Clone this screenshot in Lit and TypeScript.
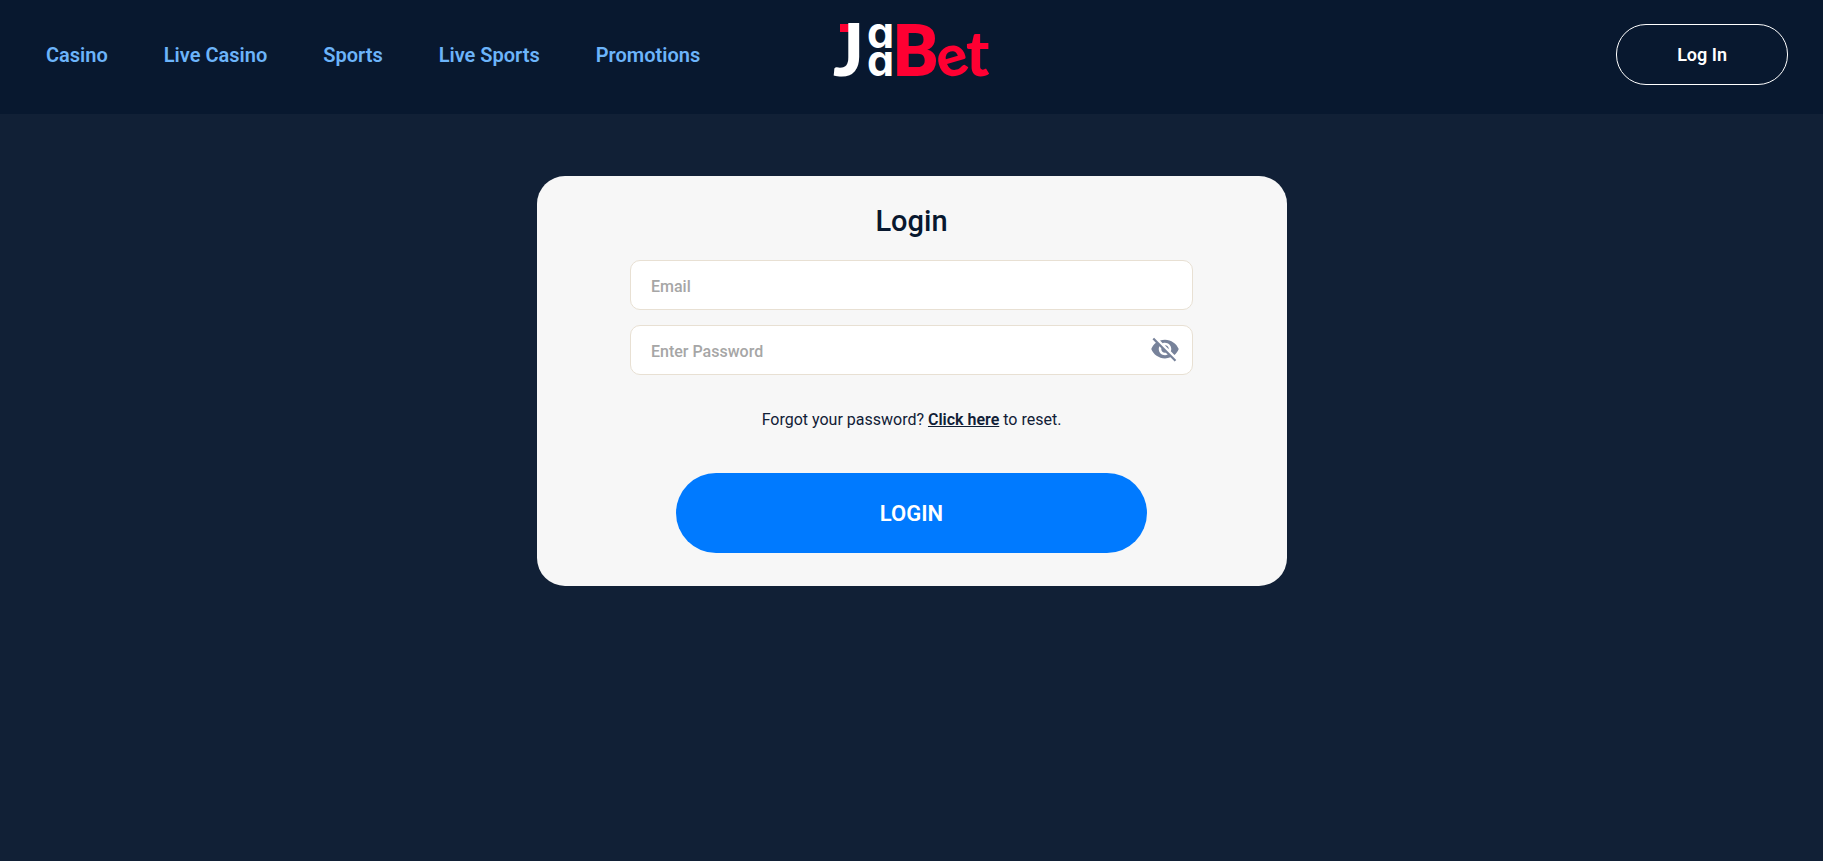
import { LitElement, html, css } from "lit";
import { customElement, state } from "lit/decorators.js";

@customElement("jaabet-logo")
class JaabetLogo extends LitElement {
  static styles = css`
    :host { display: block; }
    .mark { display: block; overflow: visible; }
    .white { fill: #ffffff; }
    .red { fill: #ff0032; }
    .tall { font: 900 72px Lato, sans-serif; }
    .stem { font: 800 72px Roboto, sans-serif; }
    .small { font: 700 43px Inter, sans-serif; font-feature-settings: "cv11" 1; }
    .round { font: 900 58px Lato, sans-serif; }
    .cross { font: 900 62px Lato, sans-serif; }
  `;
  render() {
    return html`
      <svg class="mark" width="156" height="54" viewBox="0 0 156 54" role="img" aria-label="JaaBet">
        <rect class="red" x="6" y="0" width="9" height="8" />
        <text class="white tall" x="-1" y="52">J</text>
        <text class="white small" x="33" y="24">a</text>
        <text class="white small" x="33" y="52">a</text>
        <text class="red stem" x="59" y="52">B</text>
        <text class="red round" x="103" y="52" transform="rotate(-16 119 38)">e</text>
        <text class="red cross" x="132" y="52">t</text>
      </svg>
    `;
  }
}

@customElement("site-header")
class SiteHeader extends LitElement {
  static styles = css`
    :host { display: block; background: #08182f; }
    .bar {
      display: grid;
      grid-template-columns: 1fr auto 1fr;
      align-items: center;
      padding: 24px 35px 29px;
    }
    .nav { display: flex; gap: 56px; padding-left: 11px; }
    .link {
      color: #6cb4fa;
      font-size: 20px;
      line-height: 24px;
      font-weight: 600;
      text-decoration: none;
      white-space: nowrap;
    }
    .home { display: block; align-self: start; }
    .login {
      justify-self: end;
      box-sizing: border-box;
      padding: 17px 60px;
      border: 1px solid #ffffff;
      border-radius: 30px;
      background: transparent;
      color: #ffffff;
      font: 600 18px/25px Roboto, sans-serif;
      white-space: nowrap;
      cursor: pointer;
    }
  `;
  links = ["Casino", "Live Casino", "Sports", "Live Sports", "Promotions"];
  render() {
    return html`
      <header class="bar">
        <nav class="nav">
          ${this.links.map((label) => html`<a class="link" href="#">${label}</a>`)}
        </nav>
        <a class="home" href="#" aria-label="JaaBet"><jaabet-logo></jaabet-logo></a>
        <button class="login" type="button">Log In</button>
      </header>
    `;
  }
}

@customElement("login-card")
class LoginCard extends LitElement {
  static styles = css`
    :host { display: block; width: 100%; max-width: 750px; }
    .card {
      box-sizing: border-box;
      display: flex;
      flex-direction: column;
      align-items: center;
      padding: 26px 32px 33px;
      border-radius: 28px;
      background: #f7f7f7;
      color: #08182f;
    }
    .title { margin: 0 0 20px; font-size: 29px; line-height: 38px; font-weight: 500; }
    .fields { display: grid; gap: 15px; width: 100%; max-width: 563px; }
    .field { position: relative; }
    .label { display: block; }
    .input {
      display: block;
      box-sizing: border-box;
      width: 100%;
      height: 50px;
      padding: 2px 20px 0;
      border: 1px solid #e8e0d3;
      border-radius: 10px;
      background: #ffffff;
      color: #08182f;
      font: 500 16px/24px Roboto, sans-serif;
    }
    .secret { padding-right: 56px; }
    .input::placeholder { color: #a6a6a6; opacity: 1; }
    .toggle {
      position: absolute;
      top: 9px;
      right: 13px;
      display: block;
      padding: 0;
      border: 0;
      background: none;
      color: #77829a;
      cursor: pointer;
    }
    .eye { display: block; fill: currentColor; }
    .forgot { margin: 33px 0 41px; color: #112036; font-size: 16px; line-height: 24px; }
    .reset { color: inherit; font-weight: 600; text-decoration: underline; }
    .submit {
      width: 100%;
      max-width: 471px;
      padding: 27px 26px 25px;
      border: 0;
      border-radius: 40px;
      background: #007aff;
      color: #ffffff;
      font: 600 22px/28px Roboto, sans-serif;
      cursor: pointer;
    }
  `;
  @state() shown = false;
  render() {
    return html`
      <form class="card" @submit=${(e: Event) => e.preventDefault()}>
        <h1 class="title">Login</h1>
        <div class="fields">
          <div class="field">
            <label class="label" for="email">
              <input class="input" id="email" type="email" placeholder="Email" aria-label="Email" />
            </label>
          </div>
          <div class="field">
            <label class="label" for="password">
              <input class="input secret" id="password" type=${this.shown ? "text" : "password"} placeholder="Enter Password" aria-label="Enter Password" />
            </label>
            <button class="toggle" type="button" aria-label="Toggle password visibility" @click=${() => (this.shown = !this.shown)}>
              <svg class="eye" width="30" height="30" viewBox="0 0 24 24" aria-hidden="true">
                <path d="M12 7c2.76 0 5 2.24 5 5 0 .65-.13 1.26-.36 1.83l2.92 2.92c1.51-1.26 2.7-2.89 3.43-4.75-1.73-4.39-6-7.5-11-7.5-1.4 0-2.74.25-3.98.7l2.16 2.16C10.74 7.13 11.35 7 12 7zM2 4.27l2.28 2.28.46.46C3.08 8.3 1.78 10.02 1 12c1.73 4.39 6 7.5 11 7.5 1.55 0 3.03-.3 4.38-.84l.42.42L19.73 22 21 20.73 3.27 3 2 4.27zM7.53 9.8l1.55 1.55c-.05.21-.08.43-.08.65 0 1.66 1.34 3 3 3 .22 0 .44-.03.65-.08l1.55 1.55c-.67.33-1.41.53-2.2.53-2.76 0-5-2.24-5-5 0-.79.2-1.53.53-2.2zm4.31-.78l3.15 3.15.02-.16c0-1.66-1.34-3-3-3l-.17.01z" />
              </svg>
            </button>
          </div>
        </div>
        <p class="forgot">Forgot your password? <a class="reset" href="#">Click here</a> to reset.</p>
        <button class="submit" type="submit">LOGIN</button>
      </form>
    `;
  }
}

@customElement("app-root")
class AppRoot extends LitElement {
  static styles = css`
    :host {
      display: block;
      min-height: 100vh;
      background: #112036;
      font-family: Roboto, sans-serif;
    }
    .main { display: flex; justify-content: center; padding: 62px 16px; }
  `;
  render() {
    return html`
      <site-header></site-header>
      <main class="main"><login-card></login-card></main>
    `;
  }
}
